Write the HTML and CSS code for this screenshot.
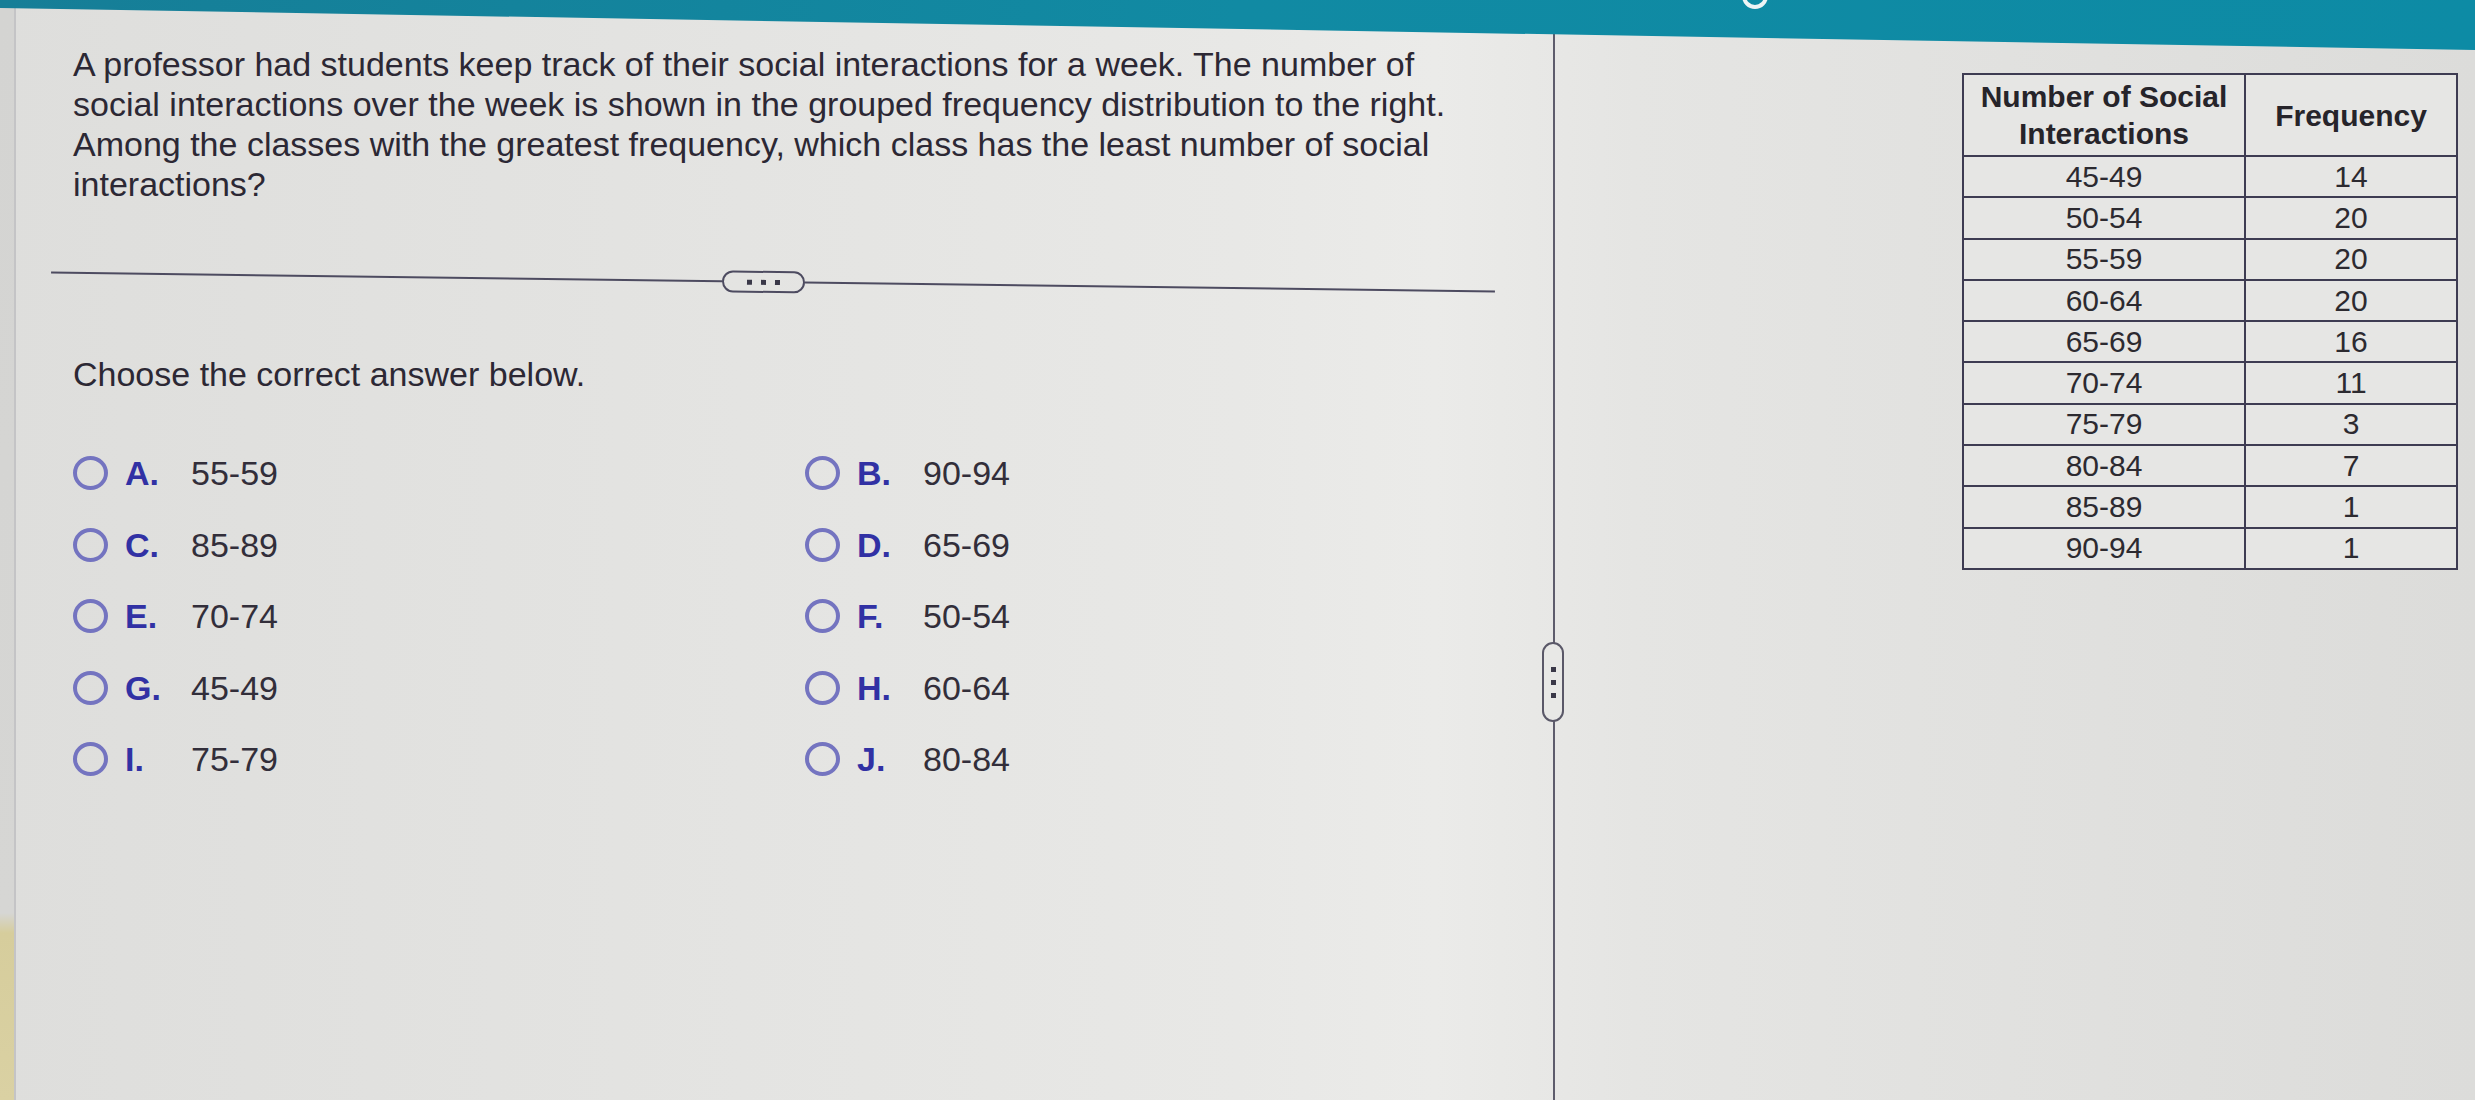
FILE: index.html
```html
<!DOCTYPE html>
<html lang="en">
<head>
<meta charset="utf-8">
<title>Grouped frequency distribution question</title>
<link rel="stylesheet" href="styles.css">
</head>
<body>
<div class="topbar">
  <span class="qmark"></span>
</div>
<div class="workspace">
  <div class="edge"></div>
  <div class="left">
    <p class="question">A professor had students keep track of their social interactions for a week. The number of<br>social interactions over the week is shown in the grouped frequency distribution to the right.<br>Among the classes with the greatest frequency, which class has the least number of social<br>interactions?</p>
    <div class="divider">
      <span class="rule rule-l"></span>
      <span class="hhandle"><i></i><i></i><i></i></span>
      <span class="rule"></span>
    </div>
    <p class="prompt">Choose the correct answer below.</p>
    <div class="choices">
      <div class="choice"><span class="radio"></span><span class="key">A.</span><span class="val">55-59</span></div>
      <div class="choice"><span class="radio"></span><span class="key">B.</span><span class="val">90-94</span></div>
      <div class="choice"><span class="radio"></span><span class="key">C.</span><span class="val">85-89</span></div>
      <div class="choice"><span class="radio"></span><span class="key">D.</span><span class="val">65-69</span></div>
      <div class="choice"><span class="radio"></span><span class="key">E.</span><span class="val">70-74</span></div>
      <div class="choice"><span class="radio"></span><span class="key">F.</span><span class="val">50-54</span></div>
      <div class="choice"><span class="radio"></span><span class="key">G.</span><span class="val">45-49</span></div>
      <div class="choice"><span class="radio"></span><span class="key">H.</span><span class="val">60-64</span></div>
      <div class="choice"><span class="radio"></span><span class="key">I.</span><span class="val">75-79</span></div>
      <div class="choice"><span class="radio"></span><span class="key">J.</span><span class="val">80-84</span></div>
    </div>
    <span class="vhandle"><i></i><i></i><i></i></span>
  </div>
  <div class="right">
    <table class="freq">
      <thead>
        <tr><th class="c1">Number of Social<br>Interactions</th><th>Frequency</th></tr>
      </thead>
      <tbody>
        <tr><td>45-49</td><td>14</td></tr>
        <tr><td>50-54</td><td>20</td></tr>
        <tr><td>55-59</td><td>20</td></tr>
        <tr><td>60-64</td><td>20</td></tr>
        <tr><td>65-69</td><td>16</td></tr>
        <tr><td>70-74</td><td>11</td></tr>
        <tr><td>75-79</td><td>3</td></tr>
        <tr><td>80-84</td><td>7</td></tr>
        <tr><td>85-89</td><td>1</td></tr>
        <tr><td>90-94</td><td>1</td></tr>
      </tbody>
    </table>
  </div>
</div>
</body>
</html>
```

FILE: styles.css
```css
* { box-sizing: border-box; }
html, body { margin: 0; }
body {
  width: 2475px;
  height: 1100px;
  overflow: hidden;
  font-family: "Liberation Sans", Arial, sans-serif;
  background: linear-gradient(90deg, #dededc 0%, #e3e3e1 25%, #e8e8e6 50%, #ebebe9 58%, #e5e5e3 66%, #dcdcda 100%);
}
.topbar {
  position: relative;
  z-index: 2;
  height: 50px;
  margin-bottom: -42px;
  background: linear-gradient(90deg, #167e97 0%, #118aa3 50%, #0d8ba5 100%);
  clip-path: polygon(0 0, 100% 0, 100% 50px, 0 8px);
  display: flex;
  align-items: flex-start;
  padding-left: 1742px;
}
.qmark {
  width: 26px;
  height: 26px;
  border: 4px solid #eef4f5;
  border-radius: 50%;
  margin-top: -17px;
}
.workspace {
  display: flex;
  height: 1092px;
}
.edge {
  width: 14px;
  flex: none;
  background: linear-gradient(180deg, #d4d4d2 0, #d6d6d4 905px, #d6cd9c 925px, #dad1a3 100%);
}
.left {
  position: relative;
  flex: none;
  width: 1541px;
  border-left: 2px solid #c4c4c6;
  border-right: 2px solid #5e5c6c;
  padding: 36px 0 0 57px;
}
.question {
  margin: 0;
  font-size: 34px;
  line-height: 40px;
  color: #2c2834;
}
.divider {
  display: flex;
  align-items: center;
  width: 1444px;
  margin: 67px 0 0 -22px;
  transform: rotate(0.75deg);
}
.rule {
  flex: 1;
  height: 2px;
  background: #4d4b60;
}
.rule-l { flex: none; width: 671px; }
.hhandle {
  width: 83px;
  height: 22px;
  border: 2px solid #4d4b60;
  border-radius: 11px;
  display: flex;
  justify-content: center;
  align-items: center;
  gap: 9px;
}
.hhandle i, .vhandle i {
  width: 5px;
  height: 5px;
  background: #3a3848;
}
.prompt {
  margin: 61px 0 0;
  font-size: 34px;
  line-height: 40px;
  color: #2c2834;
}
.choices {
  margin-top: 59px;
  display: grid;
  grid-template-columns: 732px auto;
  grid-auto-rows: 40px;
  row-gap: 31.5px;
}
.choice {
  display: flex;
  align-items: center;
  font-size: 34px;
  line-height: 40px;
}
.radio {
  width: 35px;
  height: 34px;
  border: 4px solid #7474c0;
  border-radius: 50%;
  margin-right: 17px;
  flex: none;
}
.key {
  width: 66px;
  font-weight: bold;
  color: #3131a4;
}
.val {
  color: #322e3a;
}
.vhandle {
  position: absolute;
  right: -11px;
  top: 634px;
  width: 22px;
  height: 80px;
  border: 2px solid #5a5868;
  border-radius: 11px;
  background: #e8e8e6;
  display: flex;
  flex-direction: column;
  justify-content: center;
  align-items: center;
  gap: 8px;
}
.right {
  flex: 1;
  padding: 65px 0 0 407px;
}
.freq {
  border-collapse: collapse;
  width: 496px;
  font-size: 30px;
  color: #2c2a30;
  background: #e6e6e4;
}
.freq th, .freq td {
  border: 2px solid #3e3c52;
  text-align: center;
  vertical-align: middle;
  padding: 0;
}
.freq th {
  height: 82px;
  line-height: 37px;
  font-weight: bold;
  color: #26242a;
}
.freq th.c1 { width: 282px; }
.freq td {
  height: 41.3px;
  line-height: 34px;
}
```
